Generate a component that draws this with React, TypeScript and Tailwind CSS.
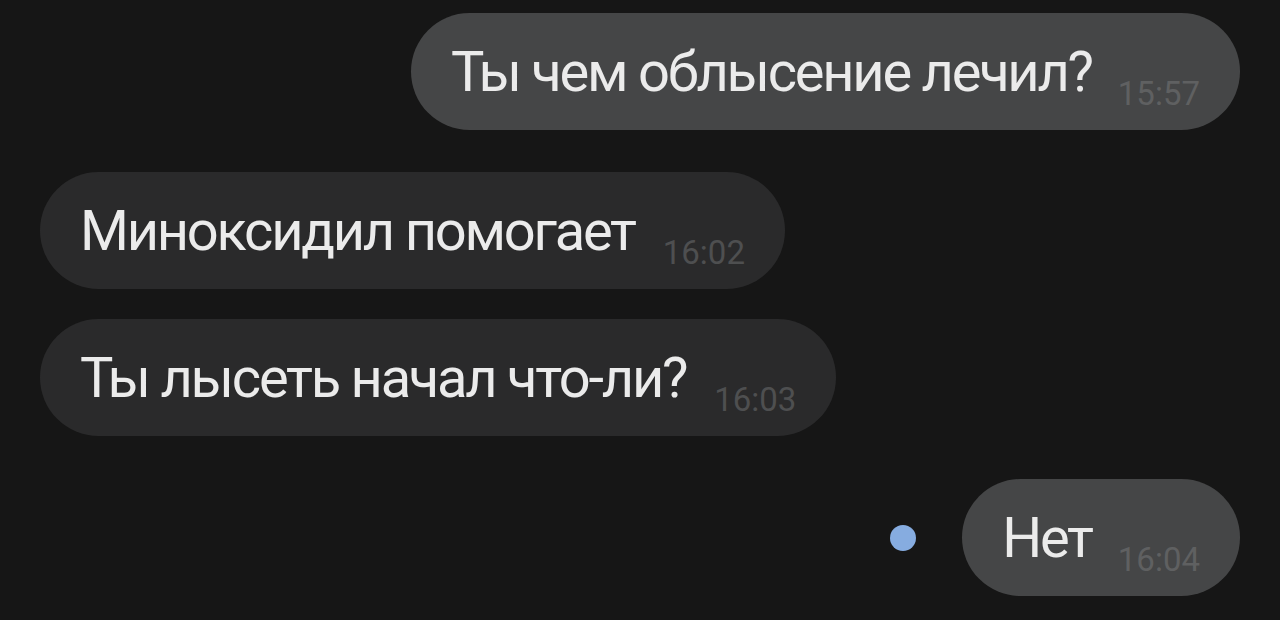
import React from "react";

type Msg = {
  text: string;
  time: string;
  out: boolean;
};

const messages: Msg[] = [
  { text: "Ты чем облысение лечил?", time: "15:57", out: true },
  { text: "Миноксидил помогает", time: "16:02", out: false },
  { text: "Ты лысеть начал что-ли?", time: "16:03", out: false },
  { text: "Нет", time: "16:04", out: true },
];

const Bubble: React.FC<{ msg: Msg }> = ({ msg }) => {
  return (
    <div
      className={
        msg.out
          ? "flex h-[117px] items-center rounded-full bg-[#454647] pl-10 pr-10"
          : "flex h-[117px] items-center rounded-full bg-[#2a2a2b] pl-10 pr-10"
      }
    >
      <span className="whitespace-nowrap text-[56px] leading-none tracking-[-0.04em] text-[#ebebeb]">
        {msg.text}
      </span>
      <span
        className={
          msg.out
            ? "ml-[26px] mb-[20px] self-end text-[33px] leading-none text-[#5f6061]"
            : "ml-[28px] mb-[20px] self-end text-[33px] leading-none text-[#4e4f50]"
        }
      >
        {msg.time}
      </span>
    </div>
  );
};

export default function App() {
  return (
    <div
      className="flex h-[620px] w-[1280px] flex-col overflow-hidden bg-[#161616] px-10 pt-[13px]"
      style={{ fontFamily: "Roboto, 'Noto Sans', sans-serif" }}
    >
      <div className="flex justify-end">
        <Bubble msg={messages[0]} />
      </div>
      <div className="mt-[42px] flex justify-start">
        <Bubble msg={messages[1]} />
      </div>
      <div className="mt-[30px] flex justify-start">
        <Bubble msg={messages[2]} />
      </div>
      <div className="mt-[43px] flex items-center justify-end">
        <div className="mr-[46px] h-[26px] w-[26px] rounded-full bg-[#86ace0]" />
        <Bubble msg={messages[3]} />
      </div>
    </div>
  );
}
